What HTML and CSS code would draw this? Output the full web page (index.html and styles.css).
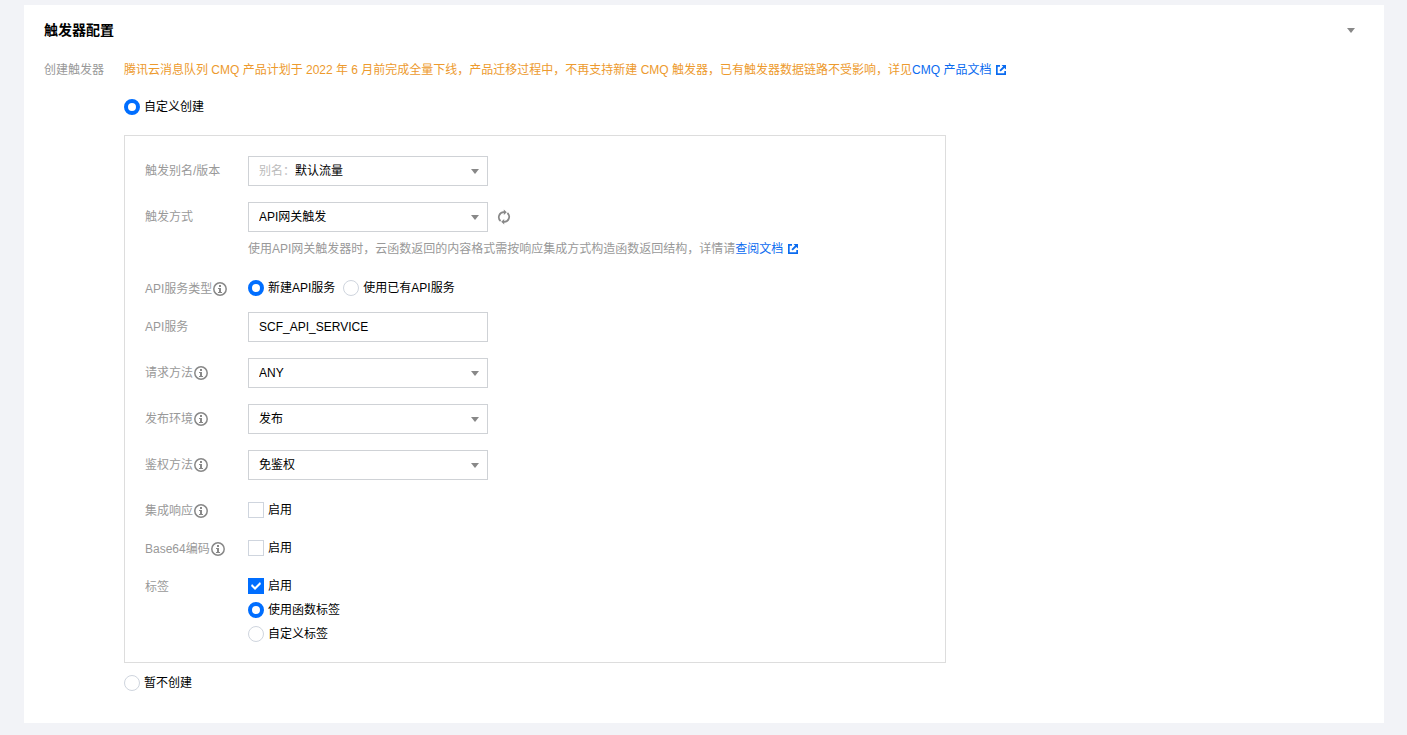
FILE: index.html
```html
<!DOCTYPE html>
<html lang="zh-CN">
<head>
<meta charset="utf-8">
<title>触发器配置</title>
<link rel="stylesheet" href="styles.css">
</head>
<body>
<svg class="sprite" aria-hidden="true">
  <symbol id="info" viewBox="0 0 14 14">
    <circle cx="7" cy="7" r="6.2" fill="none" stroke="currentColor" stroke-width="1.5"/>
    <path d="M6 3h2v2H6zM5 6h3v4h1v1H5v-1h1V7H5z" fill="currentColor"/>
  </symbol>
  <symbol id="external" viewBox="0 0 10 10">
    <path d="M4 0H0v10h10V6H8.300v2.300H1.700V1.700H4zM5.500 0H10v4.500L8.400 2.900 4.700 6.600 3.400 5.300l3.700-3.700z" fill="currentColor"/>
  </symbol>
</svg>
<main class="card">
  <header class="card-head">
    <h2 class="card-title">触发器配置</h2>
    <button class="collapse" type="button" aria-label="收起"></button>
  </header>
  <form class="setting">
    <div class="setting-label">创建触发器</div>
    <div class="setting-body">
      <p class="notice">腾讯云消息队列 CMQ 产品计划于 2022 年 6 月前完成全量下线，产品迁移过程中，不再支持新建 CMQ 触发器，已有触发器数据链路不受影响，详见<a class="link" href="#">CMQ 产品文档<svg class="external"><use href="#external"/></svg></a></p>
      <label class="choice choice-create"><input class="radio" type="radio" name="create" checked>自定义创建</label>
      <div class="panel">
        <div class="row row-field">
          <label class="row-label" for="alias">触发别名/版本</label>
          <div class="row-control">
            <div class="select"><span class="prefix">别名：</span><select id="alias"><option>默认流量</option></select></div>
          </div>
        </div>
        <div class="row row-field">
          <label class="row-label" for="trigger">触发方式</label>
          <div class="row-control">
            <div class="inline">
              <div class="select"><select id="trigger"><option>API网关触发</option></select></div>
              <button class="refresh" type="button" aria-label="刷新">
                <svg viewBox="0 0 14 16"><g fill="none" stroke="currentColor" stroke-width="1.700"><path d="M3.600 12A5 5 0 0 1 7 3.200"/><path d="M10.400 4A5 5 0 0 1 7 12.800"/></g><path d="M6.800 .5l3 2.700-3 2.700zM7.200 10.100v5.400l-3-2.700z" fill="currentColor"/></svg>
              </button>
            </div>
            <p class="hint">使用API网关触发器时，云函数返回的内容格式需按响应集成方式构造函数返回结构，详情请<a class="link" href="#">查阅文档<svg class="external"><use href="#external"/></svg></a></p>
          </div>
        </div>
        <div class="row row-choice">
          <div class="row-label">API服务类型<svg class="info"><use href="#info"/></svg></div>
          <div class="row-control choices">
            <label class="choice"><input class="radio" type="radio" name="service" checked>新建API服务</label>
            <label class="choice"><input class="radio" type="radio" name="service">使用已有API服务</label>
          </div>
        </div>
        <div class="row row-field">
          <label class="row-label" for="api">API服务</label>
          <div class="row-control"><input class="text" id="api" type="text" value="SCF_API_SERVICE"></div>
        </div>
        <div class="row row-field">
          <label class="row-label" for="method">请求方法<svg class="info"><use href="#info"/></svg></label>
          <div class="row-control"><div class="select"><select id="method"><option>ANY</option></select></div></div>
        </div>
        <div class="row row-field">
          <label class="row-label" for="env">发布环境<svg class="info"><use href="#info"/></svg></label>
          <div class="row-control"><div class="select"><select id="env"><option>发布</option></select></div></div>
        </div>
        <div class="row row-field">
          <label class="row-label" for="auth">鉴权方法<svg class="info"><use href="#info"/></svg></label>
          <div class="row-control"><div class="select"><select id="auth"><option>免鉴权</option></select></div></div>
        </div>
        <div class="row row-choice">
          <div class="row-label">集成响应<svg class="info"><use href="#info"/></svg></div>
          <div class="row-control"><label class="choice"><input class="check" type="checkbox">启用</label></div>
        </div>
        <div class="row row-choice">
          <div class="row-label">Base64编码<svg class="info"><use href="#info"/></svg></div>
          <div class="row-control"><label class="choice"><input class="check" type="checkbox">启用</label></div>
        </div>
        <div class="row row-choice">
          <div class="row-label">标签</div>
          <div class="row-control">
            <label class="choice"><input class="check" type="checkbox" checked>启用</label>
            <label class="choice"><input class="radio" type="radio" name="tag" checked>使用函数标签</label>
            <label class="choice"><input class="radio" type="radio" name="tag">自定义标签</label>
          </div>
        </div>
      </div>
      <label class="choice"><input class="radio" type="radio" name="create">暂不创建</label>
    </div>
  </form>
</main>
</body>
</html>
```

FILE: styles.css
```css
* {
  box-sizing: border-box;
}

body {
  margin: 0;
  padding: 5px 23px 12px 24px;
  background: #f2f3f7;
  color: #000;
  font: 12px/20px "Liberation Sans", "Noto Sans CJK SC", sans-serif;
}

p,
h2 {
  margin: 0;
}

button,
input,
select {
  margin: 0;
  color: inherit;
  font: inherit;
}

.sprite {
  position: absolute;
  width: 0;
  height: 0;
}

.card {
  padding: 15px 20px 28px;
  background: #fff;
}

.card-head {
  display: flex;
  align-items: center;
  justify-content: space-between;
  margin-bottom: 20px;
}

.card-title {
  font-size: 14px;
  line-height: 20px;
}

.collapse {
  display: flex;
  align-items: center;
  justify-content: center;
  width: 26px;
  height: 20px;
  padding: 0;
  border: 0;
  background: none;
}

.collapse::before,
.select::after {
  content: "";
  border: 4px solid transparent;
  border-top: 5px solid #888;
  border-bottom: 0;
}

.setting {
  display: grid;
  grid-template-columns: 80px 1fr;
}

.setting-label,
.row-label {
  color: #999;
}

.notice {
  color: #ed9a2d;
}

.link {
  color: #0a6bf0;
  text-decoration: none;
}

.external {
  width: 10px;
  height: 10px;
  margin-left: 5px;
  vertical-align: -1px;
}

.choice {
  display: flex;
  align-items: center;
  gap: 4px;
  width: fit-content;
  line-height: 24px;
}

.choice-create {
  margin-top: 15px;
}

.panel {
  max-width: 822px;
  margin: 16px 0 8px;
  padding: 12px 20px;
  border: 1px solid #ddd;
}

.row {
  display: grid;
  grid-template-columns: 103px 1fr;
}

.row-field {
  padding: 8px 0;
  line-height: 30px;
}

.row-choice {
  padding: 10px 0 4px;
  line-height: 24px;
}

.row-label {
  display: flex;
}

.row-choice .row-label {
  line-height: 26px;
  max-height: 24px;
}

.info {
  width: 14px;
  height: 14px;
  margin-left: 1px;
  align-self: flex-start;
  margin-top: 8px;
  color: #888;
}

.row-choice .info {
  margin-top: 6px;
}

.choices,
.inline {
  display: flex;
  gap: 8px;
}

.select,
.text {
  width: 240px;
  height: 30px;
  border: 1px solid #cfd2d6;
  background: #fff;
}

.text {
  padding: 0 10px;
}

.select {
  position: relative;
  display: flex;
  line-height: 28px;
}

.select::after {
  position: absolute;
  top: 12px;
  right: 8px;
  pointer-events: none;
}

.select select {
  flex: 1;
  min-width: 0;
  padding: 0 24px 0 10px;
  border: 0;
  background: none;
  appearance: none;
}

.prefix {
  padding-left: 10px;
  color: #bbb;
}

.prefix + select {
  padding-left: 0;
}

.refresh {
  display: flex;
  align-items: center;
  padding: 0 1px;
  border: 0;
  background: none;
  color: #888;
}

.refresh svg {
  width: 14px;
  height: 16px;
}

.hint {
  margin-top: 8px;
  color: #999;
  line-height: 18px;
}

.radio,
.check {
  display: grid;
  place-items: center;
  width: 16px;
  height: 16px;
  border: 1px solid #cfd5de;
  background: #fff;
  appearance: none;
}

.radio {
  border-radius: 50%;
}

.radio:checked {
  border: 4px solid #006eff;
}

.check:checked {
  border-color: #006eff;
  background: #006eff;
}

.check:checked::before {
  content: "";
  width: 10px;
  height: 8px;
  background: #fff;
  clip-path: polygon(0 4px, 1px 2px, 4px 5px, 9px 0, 10px 2px, 4px 8px);
}
```
